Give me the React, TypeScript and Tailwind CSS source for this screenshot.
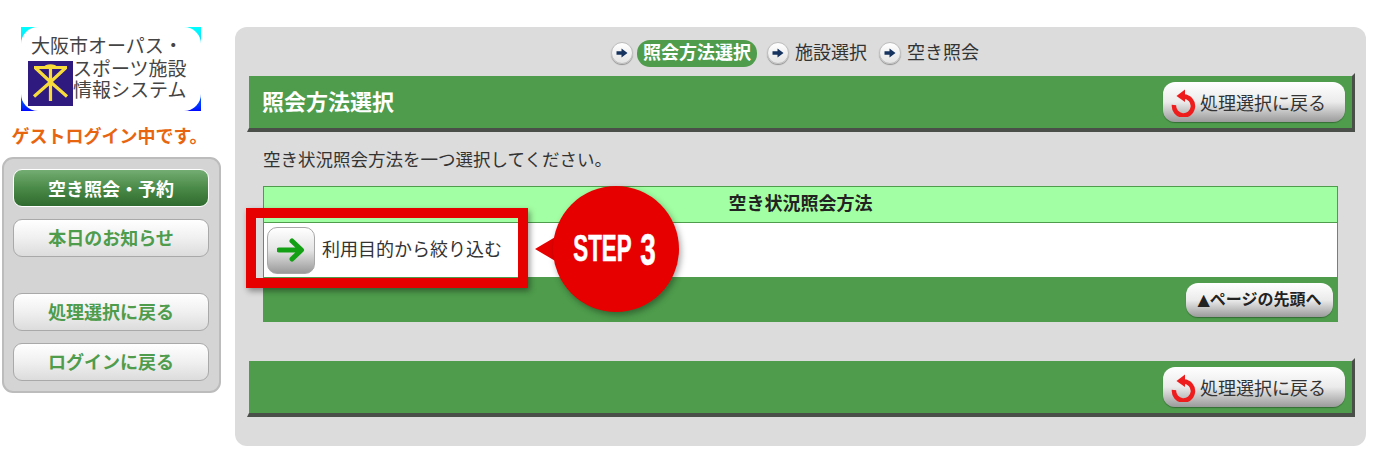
import React from 'react';

const jp = "font-['Liberation_Sans','Noto_Sans_CJK_JP',sans-serif]";

const StepDot = () => (
  <span className="flex h-[22px] w-[22px] items-center justify-center rounded-full border border-[#bdbdbd] bg-gradient-to-b from-white to-[#e4e4e4] shadow-[0_1px_1px_rgba(0,0,0,0.35)]">
    <svg width="12" height="10" viewBox="0 0 12 10">
      <path d="M0.5 3.200H5.500V0.500L11.500 5L5.500 9.500V6.800H0.500Z" fill="#16335f" />
    </svg>
  </span>
);

const ReturnIcon = () => (
  <svg width="26" height="28" viewBox="0 0 26 28" fill="none" className="mt-[2px]">
    <path d="M14 7.500 A9.500 9.500 0 1 1 4 16" stroke="#ee1c1c" strokeWidth="4.500" />
    <path d="M15 0.500 L15 13 L6.500 7 Z" fill="#ee1c1c" />
  </svg>
);

const BackButton = () => (
  <button className="flex h-[40px] w-[182px] items-center rounded-[12px] bg-gradient-to-b from-white via-[#ebebeb] to-[#9b9b9b] pl-[7px] text-[18px] leading-none text-[#333] shadow-[0_1px_1px_rgba(0,0,0,0.3)]">
    <ReturnIcon />
    <span className="ml-[4px] pt-[3px]">処理選択に戻る</span>
  </button>
);

const GreenBar = ({ title, className }: { title?: string; className: string }) => (
  <div className={`-ml-[1px] flex h-[59px] w-[1108px] items-center justify-between border-t-[3px] border-r-[3px] border-b-[4px] border-l-[2px] border-t-transparent border-r-[#4a4f4a] border-b-[#4a4f4a] border-l-transparent bg-[#4e9c4c] bg-clip-padding pr-[7px] pl-[13px] ${className}`}>
    <span className="pt-[1px] text-[22px] font-bold text-white">{title}</span>
    <BackButton />
  </div>
);

const SideButton = ({ label, className }: { label: string; className: string }) => (
  <button className={`flex h-[38px] w-[196px] items-center justify-center rounded-[9px] border border-[#a9a9a9] bg-gradient-to-b from-white via-[#f0f0f0] to-[#dcdcdc] pt-[2px] text-[18px] leading-none font-bold text-[#4e9c4c] ${className}`}>
    {label}
  </button>
);

const Logo = () => (
  <div className="h-[84px] w-[180px] bg-gradient-to-b from-[#00ffff] to-[#0000ff]">
    <div className="h-full w-full rounded-[17px] bg-white pt-[7px] pl-[7px] text-[#444] leading-none">
      <div className="pl-[3px] text-[19px] leading-[25px]">大阪市オーパス・</div>
      <div className="flex">
        <svg width="45" height="45" viewBox="0 0 45 45" className="mt-[2px] shrink-0">
          <rect width="45" height="45" fill="#2f1a80" />
          <path d="M6 6.500H39M7.500 7L22.500 21L37.500 7M22.500 6V40M6 35.500L22.500 21L39 35.500" stroke="#f8dc3c" strokeWidth="3.200" fill="none" />
          <path d="M17 6C18 3.500 27 3.500 28 6" stroke="#f8dc3c" strokeWidth="2" fill="none" />
        </svg>
        <div className="text-[19px] leading-[21px]">
          <div>スポーツ施設</div>
          <div>情報システム</div>
        </div>
      </div>
    </div>
  </div>
);

export default function App() {
  return (
    <div className={`flex h-[470px] w-[1390px] bg-white ${jp}`}>
      <aside className="w-[235px] shrink-0 pt-[27px] pl-[2px]">
        <div className="ml-[19px]">
          <Logo />
        </div>
        <p className="mt-[15px] w-[215px] text-center text-[18px] leading-[22px] font-bold whitespace-nowrap text-[#e8650f]">ゲストログイン中です。</p>
        <nav className="mt-[9px] h-[236px] w-[219px] rounded-[11px] border-2 border-[#bcbcbc] bg-[#d4d4d4] pt-[10px] pl-[9px]">
          <button className="flex h-[38px] w-[196px] items-center justify-center rounded-[9px] border border-white bg-gradient-to-b from-[#74ad72] via-[#4a8a48] to-[#2f6b2e] pt-[3px] text-[18px] leading-none font-bold text-white">
            空き照会・予約
          </button>
          <SideButton label="本日のお知らせ" className="mt-[12px]" />
          <SideButton label="処理選択に戻る" className="mt-[36px]" />
          <SideButton label="ログインに戻る" className="mt-[12px]" />
        </nav>
      </aside>

      <main className="mt-[27px] h-[419px] w-[1131px] rounded-[12px] bg-[#dcdcdc] pl-[13px]">
        <div className="flex h-[46px] items-center justify-center gap-[6px] pt-[6px] pr-[24px] text-[18px] text-[#333]">
          <StepDot />
          <span className="-ml-[2px] rounded-[13px] bg-[#4e9c4c] px-[6px] leading-[27px] font-bold text-white">照会方法選択</span>
          <span className="ml-[4px]"><StepDot /></span>
          <span>施設選択</span>
          <span className="ml-[6px]"><StepDot /></span>
          <span>空き照会</span>
        </div>

        <GreenBar title="照会方法選択" className="" />

        <p className="mt-[16px] ml-[15px] text-[17.500px] leading-[24px] text-[#333]">空き状況照会方法を一つ選択してください。</p>

        <div className="relative mt-[14px] ml-[15px] w-[1075px] border border-[#4e9c4c]">
          <div className="flex h-[36px] items-center justify-center border-b border-[#4e9c4c] bg-[#a3ffa3] text-[18px] font-bold text-[#222]">空き状況照会方法</div>
          <div className="flex h-[55px] items-center border-b border-[#4e9c4c] bg-white pl-[3px] text-[18px] text-[#333]">
            <button className="flex h-[47px] w-[48px] items-center justify-center rounded-[10px] border border-[#a8a8a8] bg-gradient-to-b from-white via-[#e4e4e4] to-[#9a9a9a]">
              <svg width="28" height="24" viewBox="0 0 28 24" fill="none">
                <path d="M2 12H24M15 3L24.500 12L15 21" stroke="#14a014" strokeWidth="5" strokeLinecap="round" strokeLinejoin="round" />
              </svg>
            </button>
            <span className="ml-[7px]">利用目的から絞り込む</span>
          </div>
          <div className="flex h-[43px] items-center justify-end bg-[#4e9c4c] pr-[4px]">
            <button className="h-[34px] w-[147px] rounded-[12px] bg-gradient-to-b from-white via-[#ebebeb] to-[#9b9b9b] text-[16px] leading-none font-bold text-[#222] shadow-[0_1px_1px_rgba(0,0,0,0.3)]">
              <span className="font-['DejaVu_Sans',sans-serif]">▲</span>ページの先頭へ
            </button>
          </div>

          {/* annotation laid over the table */}
          <div className="absolute top-[21px] left-[-18px] h-[80px] w-[282px] border-[10px] border-[#e60000] shadow-[2px_3px_6px_rgba(0,0,0,0.4)]" />
          <div className="absolute top-[49px] left-[271px] h-0 w-0 border-y-[13px] border-r-[22px] border-y-transparent border-r-[#e60000]" />
          <div className="absolute top-[-1px] left-[289px] flex h-[126px] w-[126px] items-center justify-center rounded-full bg-[#e60000] shadow-[2px_3px_6px_rgba(0,0,0,0.35)]">
            <span className="-ml-[3px] flex scale-x-[0.62] items-center gap-[14px] font-['Liberation_Sans',sans-serif] leading-none font-bold whitespace-nowrap text-white [-webkit-text-stroke:0.6px_white]">
              <span className="text-[36px]">STEP</span>
              <span className="text-[45px]">3</span>
            </span>
          </div>
        </div>

        <GreenBar className="mt-[36px]" />
      </main>
    </div>
  );
}
